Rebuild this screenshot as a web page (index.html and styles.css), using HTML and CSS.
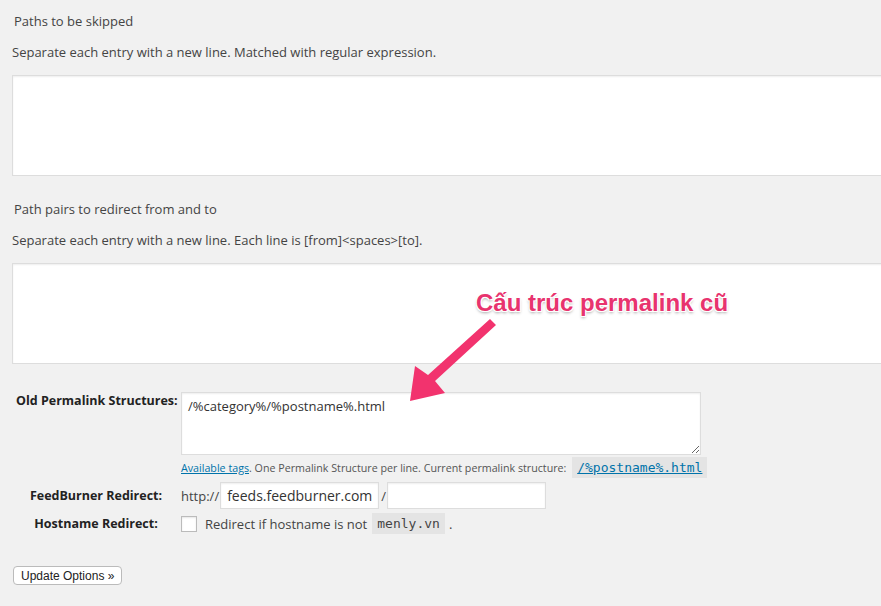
FILE: index.html
```html
<!DOCTYPE html>
<html lang="en">
<head>
    <meta charset="UTF-8">
    <title>Redirect Options</title>
    <link rel="stylesheet" href="styles.css">
</head>
<body>
    <div class="wrap">
        <!-- Skipped paths -->
        <div class="block">
            <div class="block-title">Paths to be skipped</div>
            <p class="block-desc">Separate each entry with a new line. Matched with regular expression.</p>
            <textarea class="wide"></textarea>
        </div>

        <!-- Redirect pairs -->
        <div class="block">
            <div class="block-title">Path pairs to redirect from and to</div>
            <p class="block-desc">Separate each entry with a new line. Each line is [from]&lt;spaces&gt;[to].</p>
            <textarea class="wide"></textarea>
        </div>

        <div class="form-rows">
            <div class="row row-top">
                <div class="label">Old Permalink Structures:</div>
                <div class="field">
                    <textarea class="permalinks">/%category%/%postname%.html</textarea>
                    <div class="hint"><a href="#">Available tags</a>. One Permalink Structure per line. Current permalink structure: <code class="current"><a href="#">/%postname%.html</a></code></div>
                </div>
            </div>
            <div class="row">
                <div class="label">FeedBurner Redirect:</div>
                <div class="field inline">
                    <span class="prefix">http://</span>
                    <input type="text" class="feed-host" value="feeds.feedburner.com">
                    <span class="slash">/</span>
                    <input type="text" class="feed-path">
                </div>
            </div>
            <div class="row">
                <div class="label">Hostname Redirect:</div>
                <div class="field inline">
                    <span class="checkbox"></span>
                    <span>Redirect if hostname is not</span>
                    <code class="host">menly.vn</code><span class="dot">.</span>
                </div>
            </div>
        </div>

        <button class="update-btn">Update Options &raquo;</button>

        <!-- annotation overlay -->
        <div class="note">Cấu trúc permalink cũ</div>
        <svg class="note-arrow" width="120" height="110" viewBox="0 0 120 110">
            <path d="M96 5 L102 11 L41 67 L51 79 L16 87 L21 52 L34 61 Z" fill="#f2336e"/>
        </svg>
    </div>
</body>
</html>
```

FILE: styles.css
```css
* {
    margin: 0;
    padding: 0;
    box-sizing: border-box;
}

body {
    background-color: #f1f1f1;
    font-family: "Open Sans", sans-serif;
    font-size: 13px;
    color: #444;
    overflow: hidden;
}

.wrap {
    position: relative;
    padding-top: 12px;
    height: 606px;
}

.block {
    margin-bottom: 24px;
}

.block-title {
    padding-left: 14px;
    line-height: 18px;
    margin-bottom: 13px;
}

.block-desc {
    padding-left: 12px;
    font-size: 13px;
    line-height: 18px;
    margin-bottom: 14px;
}

textarea, input[type="text"] {
    border: 1px solid #ddd;
    background: #fff;
    box-shadow: inset 0 1px 2px rgba(0,0,0,0.07);
    font-family: "Open Sans", sans-serif;
    color: #333;
    outline: none;
}

.wide {
    display: block;
    margin-left: 12px;
    width: 900px;
    height: 101px;
    resize: none;
}

.form-rows {
    padding-top: 4px;
}

.row {
    display: flex;
    align-items: center;
    margin-bottom: 4px;
}

.row-top {
    align-items: flex-start;
    margin-bottom: 7px;
}

.label {
    width: 176px;
    padding-left: 16px;
    text-align: center;
    font-size: 12.5px;
    font-weight: bold;
    color: #222;
    white-space: nowrap;
    flex-shrink: 0;
}

.row-top .label {
    padding-top: 0;
}

.field {
    margin-left: 5px;
}

.inline {
    display: flex;
    align-items: center;
}

.permalinks {
    display: block;
    width: 520px;
    height: 63px;
    padding: 4px 6px;
    font-size: 13px;
    line-height: 18px;
}

.hint {
    font-size: 10.7px;
    margin-top: 5px;
    color: #555;
}

.hint a {
    color: #0073aa;
}

code {
    font-family: "DejaVu Sans Mono", "Liberation Mono", monospace;
    background: #e4e4e4;
    padding: 3px 5px;
}

.current {
    font-size: 13px;
    margin-left: 3px;
}

.prefix {
    margin-right: 1px;
}

.feed-host {
    width: 159px;
    height: 27px;
    padding: 0 6px;
    font-size: 14px;
}

.feed-path {
    width: 159px;
    height: 27px;
}

.slash {
    margin: 0 1px 0 2px;
}

.checkbox {
    display: inline-block;
    width: 16px;
    height: 16px;
    border: 1px solid #bbb;
    background: #fff;
    box-shadow: inset 0 1px 2px rgba(0,0,0,0.1);
    margin-right: 8px;
}

.host {
    font-size: 13px;
    padding: 3px 5px;
    margin-left: 5px;
}

.dot {
    margin-left: 4px;
}

.update-btn {
    display: block;
    margin: 32px 0 0 13px;
    padding: 1px 7px;
    height: 19px;
    font-family: "Liberation Sans", Arial, sans-serif;
    font-size: 12px;
    color: #222;
    background: #fff;
    border: 1px solid #bbb;
    border-radius: 4px;
}

.note {
    position: absolute;
    left: 476px;
    top: 289px;
    font-family: "Liberation Sans", Arial, sans-serif;
    font-weight: bold;
    font-size: 24px;
    color: #e8336e;
    text-shadow: -1px -1px 0 #fff, 1px -1px 0 #fff, -1px 1px 0 #fff, 1px 1px 0 #fff, 0 2px 3px rgba(0,0,0,0.35);
}

.note-arrow {
    position: absolute;
    left: 394px;
    top: 314px;
}
```
